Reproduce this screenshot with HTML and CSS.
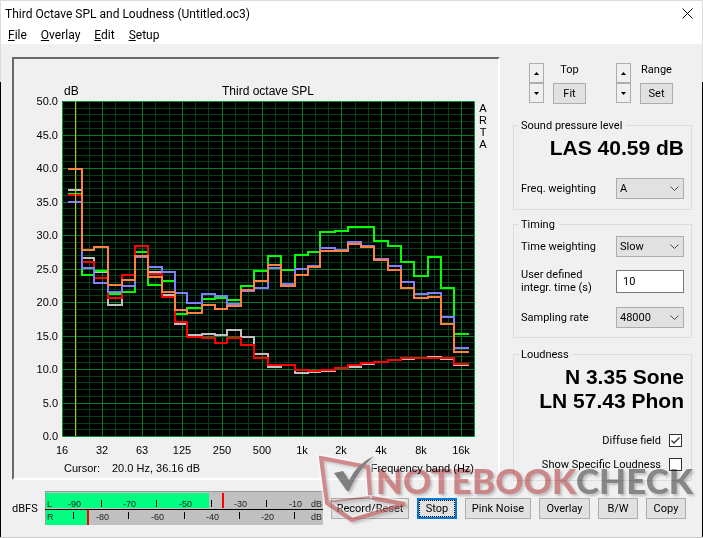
FILE: index.html
```html
<!DOCTYPE html>
<html lang="en">
<head>
<meta charset="utf-8">
<title>Third Octave SPL and Loudness (Untitled.oc3)</title>
<link rel="stylesheet" href="styles.css">
</head>
<body>
<div class="window">
  <header class="titlebar">
    <h1>Third Octave SPL and Loudness (Untitled.oc3)</h1>
    <button class="close" aria-label="Close"><svg width="11" height="11" viewBox="0 0 11 11"><path d="M.5 .5L10.5 10.5M10.5 .5L.5 10.5"/></svg></button>
  </header>
  <nav class="menu">
    <a href="#"><u>F</u>ile</a>
    <a href="#"><u>O</u>verlay</a>
    <a href="#"><u>E</u>dit</a>
    <a href="#"><u>S</u>etup</a>
  </nav>
  <main class="main">
    <section class="chart">
      <svg id="plot" viewBox="14 59 484 419" role="img" aria-label="Third octave SPL"></svg>
    </section>
    <aside class="side">
      <div class="scale">
        <div class="scale-item">
          <div class="spin">
            <button aria-label="Top up"><svg width="5" height="3"><path d="M0 3L2.5 0L5 3Z"/></svg></button>
            <button aria-label="Top down"><svg width="5" height="3"><path d="M0 0L2.5 3L5 0Z"/></svg></button>
          </div>
          <div class="scale-set"><span>Top</span><button class="btn">Fit</button></div>
        </div>
        <div class="scale-item">
          <div class="spin">
            <button aria-label="Range up"><svg width="5" height="3"><path d="M0 3L2.5 0L5 3Z"/></svg></button>
            <button aria-label="Range down"><svg width="5" height="3"><path d="M0 0L2.5 3L5 0Z"/></svg></button>
          </div>
          <div class="scale-set"><span>Range</span><button class="btn">Set</button></div>
        </div>
      </div>
      <fieldset class="level">
        <legend>Sound pressure level</legend>
        <output class="value">LAS 40.59 dB</output>
        <div class="row">
          <label for="fw">Freq. weighting</label>
          <select id="fw"><option>A</option></select>
        </div>
      </fieldset>
      <fieldset class="timing">
        <legend>Timing</legend>
        <div class="row row-first">
          <label for="tw">Time weighting</label>
          <select id="tw"><option>Slow</option></select>
        </div>
        <div class="row row-tall">
          <label for="it">User defined<br>integr. time (s)</label>
          <input id="it" type="text" value="10">
        </div>
        <div class="row">
          <label for="sr">Sampling rate</label>
          <select id="sr"><option>48000</option></select>
        </div>
      </fieldset>
      <fieldset class="loudness">
        <legend>Loudness</legend>
        <output class="value">N 3.35 Sone<br>LN 57.43 Phon</output>
        <div class="check"><label for="df">Diffuse field</label><input id="df" type="checkbox" checked></div>
        <div class="check"><label for="sl">Show Specific Loudness</label><input id="sl" type="checkbox"></div>
      </fieldset>
    </aside>
  </main>
  <footer class="footer">
    <span class="dbfs">dBFS</span>
    <svg class="meter" viewBox="45 491 278 34" role="img" aria-label="Input level">
      <rect class="meter-bg" x="45" y="491" width="278" height="34"/>
      <rect class="meter-on" x="46" y="493" width="163" height="15"/>
      <rect class="meter-on" x="46" y="510" width="41" height="15"/>
      <rect class="meter-peak" x="222" y="493" width="2" height="15"/>
      <rect class="meter-peak" x="87" y="510" width="2" height="15"/>
      <path class="meter-edge" d="M45 491.5H323M45.5 491V525"/>
      <path class="meter-ticks" d="M45 509.500H323M101.500 500V507M156.500 500V507M211.500 500V507M266.500 500V507M73.500 512V519M128.500 512V519M184.500 512V519M239.500 512V519M294.500 512V519"/>
      <g class="meter-text">
        <text x="47" y="507">L</text><text x="68" y="507">-90</text><text x="123" y="507">-70</text><text x="179" y="507">-50</text><text x="234" y="507">-30</text><text x="289" y="507">-10</text><text x="311" y="507">dB</text>
        <text x="47" y="520">R</text><text x="96" y="520">-80</text><text x="151" y="520">-60</text><text x="206" y="520">-40</text><text x="261" y="520">-20</text><text x="311" y="520">dB</text>
      </g>
    </svg>
    <div class="actions">
      <button class="btn w-xl">Record/Reset</button>
      <button class="btn w-s stop">Stop</button>
      <button class="btn w-l">Pink Noise</button>
      <button class="btn w-m">Overlay</button>
      <button class="btn w-s">B/W</button>
      <button class="btn w-s">Copy</button>
    </div>
  </footer>
  <svg class="watermark" width="387" height="88" viewBox="310 450 387 88" aria-hidden="true">
    <path class="wm-glow" d="M370 495V468L321 458L327 503L352 520L405 504L372 498"/>
  </svg>
  <svg class="watermark ink" width="387" height="88" viewBox="310 450 387 88" aria-hidden="true">
    <path class="wm-line" d="M370 495L368 467L321 458L327 503L352 520L405 504L372 498"/>
    <path class="wm-thin" d="M328 502L370 497"/>
    <path class="wm-check" d="M334 473L343 471L349 480Q358 463 374 456Q358 470 349 491H347Z"/>
    <text class="wm-red" x="376" y="494">NOTEBOOK</text>
    <text class="wm-gray" x="576" y="494">CHECK</text>
  </svg>
</div>
<script src="script.js"></script>
</body>
</html>
```
FILE: styles.css
```css
* { box-sizing: border-box; }
body {
  margin: 0;
  background: #f0f0f0;
  color: #000;
  font: 11px/13px Roboto, "Noto Sans", sans-serif;
}
.window {
  position: relative;
  min-height: 100vh;
  border: 1px solid #dcdcdc;
  border-bottom-color: #c8c8c8;
  display: flex;
  flex-direction: column;
}
.window::before, .window::after {
  content: "";
  position: absolute;
  top: 81px;
  bottom: 0;
  width: 1px;
  background: #000;
}
.window::before { left: -1px; }
.window::after { right: -1px; }
button, input, select { font: inherit; color: inherit; margin: 0; }
.titlebar, .menu {
  background: #fff;
  font: 12px/16px Roboto, sans-serif;
}
.titlebar {
  display: flex;
  align-items: center;
  justify-content: space-between;
  height: 25px;
  padding: 0 9px 0 4px;
}
.titlebar h1 { font: inherit; margin: 0; }
.close { border: 0; padding: 0; background: none; display: flex; }
.close path { stroke: #000; fill: none; }
.menu { display: flex; gap: 14px; height: 18px; padding: 1px 7px; }
.menu a { color: inherit; text-decoration: none; }
.main { display: flex; gap: 13px; padding: 13px 10px 0 11px; }
.chart {
  flex: 1;
  border: 2px solid;
  border-color: #696969 #fff #fff #696969;
  align-self: flex-start;
}
#plot { display: block; width: 100%; }
#plot text { font: 11px "Liberation Sans", sans-serif; }
#plot .head { font-size: 12px; }
.bg { fill: #000; }
.minor { stroke: #003f18; fill: none; }
.major { stroke: #008026; fill: none; }
.frame { stroke: #00922e; fill: none; }
.marker { stroke: #c8be10; fill: none; }
.series { fill: none; stroke-width: 2; }
.gray { stroke: #c0c0c0; }
.green { stroke: #00ff00; }
.red { stroke: #ff0000; }
.blue { stroke: #8080ff; }
.orange { stroke: #ff8040; }
.mid { text-anchor: middle; }
.end { text-anchor: end; }
.side { flex: 0 0 179px; }
.scale { display: flex; gap: 30px; padding: 6px 0 0 16px; }
.scale-item { display: flex; gap: 9px; width: 57px; }
.spin { flex: 0 0 15px; }
.spin button {
  display: flex;
  align-items: center;
  justify-content: center;
  width: 15px;
  height: 20px;
  padding: 0;
  border: 1px solid #adadad;
  background: #f0f0f0;
}
.scale-set { display: flex; flex-direction: column; justify-content: space-between; align-items: center; height: 41px; flex: 0 0 33px; }
.scale-set .btn { width: 33px; }
.btn {
  height: 21px;
  padding: 0;
  border: 1px solid #adadad;
  background: #e1e1e1;
  text-align: center;
  white-space: nowrap;
}
fieldset {
  margin: 0;
  padding: 0 7px;
  border: 1px solid #dcdcdc;
  min-width: 0;
}
legend { padding: 0 4px 0 2px; margin-left: -2px; }
.level { margin-top: 15px; height: 91px; }
.timing { margin-top: 8px; height: 120px; }
.loudness { margin-top: 10px; height: 133px; }
.value {
  display: block;
  text-align: right;
  font: bold 21px/24px "Liberation Sans", sans-serif;
}
.value { padding-top: 4px; }
.row { display: flex; justify-content: space-between; align-items: center; }
.level .row { margin-top: 18px; }
.timing .row { height: 35px; }
.timing .row-first { height: 31px; }
.timing .row-tall { height: 38px; }
select, input[type="text"] {
  width: 68px;
  height: 21px;
  border: 1px solid #adadad;
  border-radius: 0;
  padding: 0 3px;
}
select {
  appearance: none;
  background: #e1e1e1 url("data:image/svg+xml,%3Csvg xmlns='http://www.w3.org/2000/svg' width='9' height='6'%3E%3Cpath d='M.5 .5L4.500 4.500L8.500 .5' fill='none' stroke='%23444'/%3E%3C/svg%3E") no-repeat right 4px center;
}
input[type="text"] { height: 23px; padding: 0 6px; border-color: #7a7a7a; background: #fff; }
.check { display: flex; justify-content: flex-end; align-items: center; gap: 8px; height: 24px; }
.loudness .value { padding-bottom: 15px; }
input[type="checkbox"] {
  appearance: none;
  width: 13px;
  height: 13px;
  margin-right: 2px;
  border: 1px solid #333;
  background: #fff;
}
input[type="checkbox"]:checked {
  background: #fff url("data:image/svg+xml,%3Csvg xmlns='http://www.w3.org/2000/svg' width='11' height='11'%3E%3Cpath d='M1.500 5.500L4 8L9.500 2.500' fill='none' stroke='%23333' stroke-width='1.300'/%3E%3C/svg%3E");
}
.footer { display: flex; align-items: center; padding: 10px 16px 0 11px; }
.dbfs { flex: 0 0 33px; }
.meter { flex: 1; display: block; min-width: 0; }
.meter-bg { fill: #c0c0c0; }
.meter-on { fill: #00ff80; }
.meter-peak { fill: #f00; }
.meter-edge { stroke: #999; fill: none; }
.meter-ticks { stroke: #000; fill: none; }
.meter-text { font: 9px "Liberation Sans", sans-serif; fill: #222; }
.actions { display: flex; gap: 8px; margin-left: 8px; }
.w-s { width: 40px; }
.w-m { width: 51px; }
.w-l { width: 66px; }
.w-xl { width: 78px; }
.stop { border: 2px solid #0078d7; outline: 1px dotted #000; outline-offset: -3px; }
.watermark { position: absolute; right: 5px; bottom: -1px; pointer-events: none; }
.ink { mix-blend-mode: multiply; filter: drop-shadow(2px 2px 1px #0003); }
.watermark text { font: 900 35px Lato, sans-serif; }
.wm-glow { fill: none; stroke: #fff; stroke-width: 8; opacity: .45; }
.wm-line { fill: none; stroke: #d88e90; stroke-width: 4; }
.wm-thin { fill: none; stroke: #d8a0a2; stroke-width: 2; }
.wm-check { fill: #868686; }
.wm-red { fill: #d88e90; }
.wm-gray { fill: #909090; }
```
FILE: script.js
```js
const plot = document.getElementById("plot");
const NS = "http://www.w3.org/2000/svg";

function add(tag, attrs, text) {
  const el = document.createElementNS(NS, tag);
  for (const key in attrs) el.setAttribute(key, attrs[key]);
  if (text) el.textContent = text;
  plot.appendChild(el);
}

const left = 62, right = 474, top_ = 101, bottom = 436;
const bandX = k => Math.round(62.3 + 13.29 * k);
const dbY = db => Math.round(bottom - db * 6.7);

add("rect", { class: "bg", x: left, y: top_, width: right - left, height: bottom - top_ });

let minor = "", major = "";
for (let db = 1; db < 50; db++) {
  const line = `M${left} ${dbY(db) + 0.5}H${right}`;
  if (db % 5) minor += line; else major += line;
}
for (let k = 1; k < 31; k++) {
  const line = `M${bandX(k) + 0.5} ${top_}V${bottom}`;
  if (k % 3) minor += line; else major += line;
}
add("path", { class: "minor", d: minor });
add("path", { class: "major", d: major });
add("path", { class: "frame", d: `M${left + 0.5} ${top_ + 0.5}H${right + 0.5}V${bottom + 0.5}H${left + 0.5}Z` });

// Band boundaries and the level of each band, in plot units.
const edges = [68, 82, 94, 108, 122, 135, 148, 162, 175, 187, 202, 215, 227, 241, 254, 268, 281, 295, 308, 320, 335, 348, 361, 374, 388, 401, 414, 428, 441, 454, 469];
const series = {
  gray: [190, 258, 272, 305, 286, 256, 272, 295, 324, 335, 334, 335, 330, 337, 354, 367, 365, 373, 372, 371, 368, 367, 364, 362, 360, 359, 358, 357, 359, 365],
  green: [194, 275, 271, 294, 292, 252, 285, 281, 314, 308, 299, 298, 300, 286, 271, 256, 270, 255, 252, 232, 231, 227, 227, 241, 246, 262, 276, 257, 288, 334],
  red: [195, 262, 278, 298, 275, 246, 274, 297, 322, 337, 338, 343, 338, 345, 358, 365, 365, 370, 371, 370, 368, 365, 363, 362, 360, 358, 358, 358, 358, 364],
  blue: [202, 268, 283, 292, 286, 257, 267, 272, 293, 303, 294, 296, 304, 291, 288, 268, 284, 269, 266, 248, 250, 242, 246, 259, 266, 282, 294, 293, 317, 348],
  orange: [169, 250, 247, 285, 280, 256, 277, 292, 310, 313, 305, 309, 306, 290, 281, 265, 286, 275, 267, 251, 251, 244, 247, 260, 270, 288, 298, 297, 324, 352]
};
for (const name in series) {
  let d = `M${edges[0]} ${series[name][0]}`;
  series[name].forEach((y, i) => { d += `V${y}H${edges[i + 1]}`; });
  add("path", { class: "series " + name, d });
}
add("path", { class: "marker", d: `M75.5 ${top_}V${bottom}` });

for (let db = 0; db <= 50; db += 5) {
  add("text", { class: "end", x: 58, y: dbY(db) + 4 }, db.toFixed(1));
}
["16", "32", "63", "125", "250", "500", "1k", "2k", "4k", "8k", "16k"].forEach((label, i) => {
  add("text", { class: "mid", x: bandX(i * 3), y: 454 }, label);
});
add("text", { class: "head", x: 64, y: 95 }, "dB");
add("text", { class: "head mid", x: 268, y: 95 }, "Third octave SPL");
[..."ARTA"].forEach((c, i) => add("text", { class: "mid", x: 483, y: 112 + i * 12 }, c));
add("text", { x: 64, y: 472 }, "Cursor:");
add("text", { x: 112, y: 472 }, "20.0 Hz, 36.16 dB");
add("text", { class: "end", x: 474, y: 472 }, "Frequency band (Hz)");
```
